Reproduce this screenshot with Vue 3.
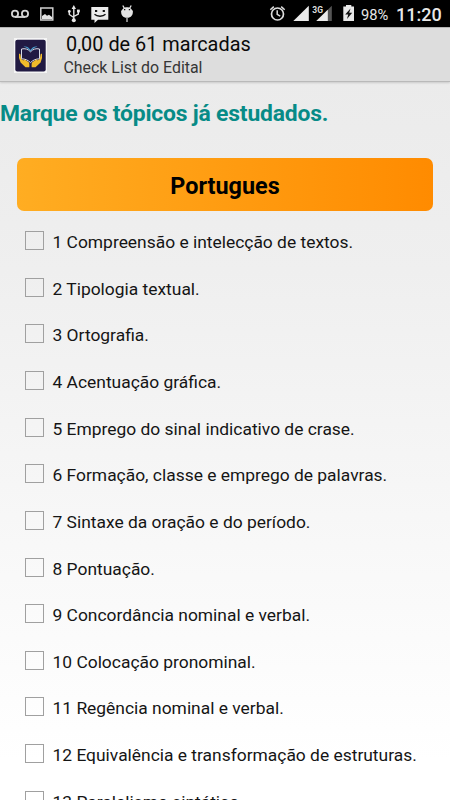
<script setup>
import { ref } from 'vue'

const topics = ref([
  'Compreensão e intelecção de textos.',
  'Tipologia textual.',
  'Ortografia.',
  'Acentuação gráfica.',
  'Emprego do sinal indicativo de crase.',
  'Formação, classe e emprego de palavras.',
  'Sintaxe da oração e do período.',
  'Pontuação.',
  'Concordância nominal e verbal.',
  'Colocação pronominal.',
  'Regência nominal e verbal.',
  'Equivalência e transformação de estruturas.',
  'Paralelismo sintático.',
])
</script>

<template>
  <div class="screen">
    <div class="status">
      <svg class="notifications" width="150" height="27" viewBox="0 0 150 27">
        <g fill="none" stroke="#d6d6d6" stroke-width="1.8">
          <circle cx="15" cy="13.7" r="3.1" />
          <circle cx="25" cy="13.7" r="3.1" />
          <path d="M15 17h10" />
        </g>
        <rect x="40.8" y="8" width="12" height="12" fill="none" stroke="#d0d0d0" stroke-width="1.5" />
        <path d="M42 19v-3l3-2 2 1.7 2-1 3 2.3v2z" fill="#e4e4e4" />
        <g fill="none" stroke="#e6e6e6" stroke-width="1.4">
          <path d="M73.8 8v12M69.3 11.5v3l4.5 3M78.3 10.5v3.5l-4.5 2.5" />
        </g>
        <path d="M73.8 5l2.2 4h-4.4z" fill="#e6e6e6" />
        <circle cx="73.8" cy="20.3" r="2" fill="#e6e6e6" />
        <circle cx="69.3" cy="11.4" r="1.4" fill="#e6e6e6" />
        <rect x="77" y="9.6" width="2.8" height="2.8" fill="#e6e6e6" />
        <path d="M91.3 7h17v12.8H98L94.5 23v-3.2h-3.2z" fill="#ebebeb" />
        <path d="M95 10h2.2v2H95zM102.7 10h2.2v2h-2.2z" fill="#111" />
        <path d="M94.5 14.3c2.5 2.6 8.5 2.6 11 0" fill="none" stroke="#111" stroke-width="1.3" />
        <path d="M122.8 5.5l1.7 3M131.2 5.5l-1.7 3" stroke="#e4e4e4" stroke-width="1.3" />
        <path d="M121.3 10.5h11.4c.8 4.2-1.7 7.4-5.7 7.4s-6.5-3.2-5.7-7.4z" fill="#e4e4e4" />
        <path d="M121.5 12c0-6.5 11-6.5 11 0z" fill="#e4e4e4" />
        <path d="M124 9h1.3v1.3H124zM128.8 9h1.3v1.3h-1.3z" fill="#111" />
        <path d="M127 17v5" stroke="#a5a5a5" stroke-width="1.6" />
      </svg>
      <svg class="system" width="90" height="27" viewBox="268 0 90 27">
        <g fill="none" stroke="#dedede" stroke-width="1.7">
          <circle cx="277.5" cy="14" r="6" />
          <path d="M277.2 10.2V14.3l3 1.8M270.3 9.8l3.5-3.2M284.7 9.8l-3.5-3.2" stroke-width="1.5" />
        </g>
        <path d="M308.8 5.8V21H293.3z" fill="#ebebeb" />
        <path d="M331.8 5.8V21H316.3z" fill="#555" />
        <path d="M327.8 9.7V21H316.3z" fill="#ebebeb" />
        <text class="network" x="312.3" y="12.8" stroke="#000" stroke-width="2" paint-order="stroke" fill="#ddd">3G</text>
        <path d="M343.3 6.5h2.7V5h5.3v1.5h2.7V21h-10.7z" fill="#e8e8e8" />
        <path d="M350.5 8.5l-5.3 6h3l-1.2 4.5 5.2-6.2h-3z" fill="#111" />
      </svg>
      <span class="battery">98%</span>
      <span class="clock">11:20</span>
    </div>

    <header class="bar">
      <svg class="logo" width="33" height="35" viewBox="0 0 33 35">
        <rect width="33" height="35" fill="#f5f5f5" />
        <rect x="1.3" y="1.8" width="30.4" height="31.6" rx="2" fill="#211a43" />
        <path d="M7.5 11c3.5-.8 6.5 0 9 2.8 2.5-2.8 5.5-3.6 9-2.8v9.8c-3.8.2-6.3 1.1-9 3.8-2.7-2.7-5.2-3.6-9-3.8z" fill="#211a43" stroke="#d9dce7" stroke-width="1" />
        <path d="M9.5 8.7c3.2-.6 5 .5 7 3.3 2-2.8 3.8-3.9 7-3.3-2.7.5-4.7 2-7 4.7-2.3-2.7-4.3-4.2-7-4.7z" fill="#4b9dcc" />
        <path d="M5 15.5l1.4.8.7 4.5 2.2 1.7 1-1.2 4.2 2.8c1 1 1 2 .8 5.1h-3.8L6.6 24.5 5 20zM28 15.5l-1.4.8-.7 4.5-2.2 1.7-1-1.2-4.2 2.8c-1 1-1 2-.8 5.1h3.8l5.1-4.7L28 20z" fill="#f0bb2a" />
      </svg>
      <div class="titles">
        <div class="title">0,00 de 61 marcadas</div>
        <div class="subtitle">Check List do Edital</div>
      </div>
    </header>

    <main>
      <h1>Marque os tópicos já estudados.</h1>
      <div class="subject">Portugues</div>
      <ul>
        <li v-for="(topic, i) in topics" :key="i">
          <span class="box"></span>
          <span class="topic">{{ i + 1 }} {{ topic }}</span>
        </li>
      </ul>
    </main>
  </div>
</template>

<style>
body {
  overflow: hidden;
}
</style>

<style scoped>
.screen {
  width: 450px;
  height: 800px;
  overflow: hidden;
  font-family: Roboto, "Liberation Sans", sans-serif;
  color: #151515;
  background: linear-gradient(#ebebeb 80px, #efefef 270px, #ffffff 760px);
}
.status {
  display: flex;
  height: 27px;
  background: #000;
  color: #e8e8e8;
  white-space: nowrap;
}
.notifications {
  margin-right: 118px;
}
.notifications,
.system,
.logo {
  flex: none;
  display: block;
}
.network {
  font: bold 8.5px Roboto, sans-serif;
}
.battery {
  width: 38px;
  padding-left: 3px;
  flex: none;
  box-sizing: border-box;
  font-size: 14.7px;
  line-height: 30px;
}
.clock {
  font-size: 18px;
  font-weight: 500;
  line-height: 30px;
}
.bar {
  display: flex;
  box-sizing: border-box;
  height: 55px;
  padding: 9.5px 0 0 14px;
  background: #dddddd;
  border-top: 1px solid #b4b4b4;
  border-bottom: 1px solid #b9b9b9;
  box-shadow: 0 1px 2px rgba(0, 0, 0, 0.14);
}
.titles {
  padding-left: 17px;
  margin-top: -4.5px;
  white-space: nowrap;
}
.title {
  padding-left: 2px;
  font-size: 19.9px;
  line-height: 24px;
  color: #0a0a0a;
}
.subtitle {
  font-size: 15.9px;
  line-height: 22px;
  margin-left: -0.5px;
  color: #363636;
}
h1 {
  margin: 0;
  padding-top: 18px;
  font-size: 22.9px;
  letter-spacing: -0.19px;
  line-height: 28px;
  font-weight: 700;
  color: #078b87;
  white-space: nowrap;
}
.subject {
  height: 53px;
  margin: 30.3px 17px 0;
  border-radius: 7px;
  background: linear-gradient(90deg, #ffad22, #ff8b00);
  color: #000;
  font-size: 23.4px;
  font-weight: 700;
  line-height: 56px;
  text-align: center;
}
ul {
  margin: 5.8px 0 0;
  padding: 0 0 0 25px;
  list-style: none;
}
li {
  display: flex;
  align-items: center;
  height: 46.67px;
}
.box {
  flex: none;
  box-sizing: border-box;
  width: 19px;
  height: 19px;
  border: 1px solid #a0a0a0;
}
.topic {
  padding: 3px 0 0 8.5px;
  font-size: 17.42px;
  line-height: 22px;
  white-space: nowrap;
}
</style>
